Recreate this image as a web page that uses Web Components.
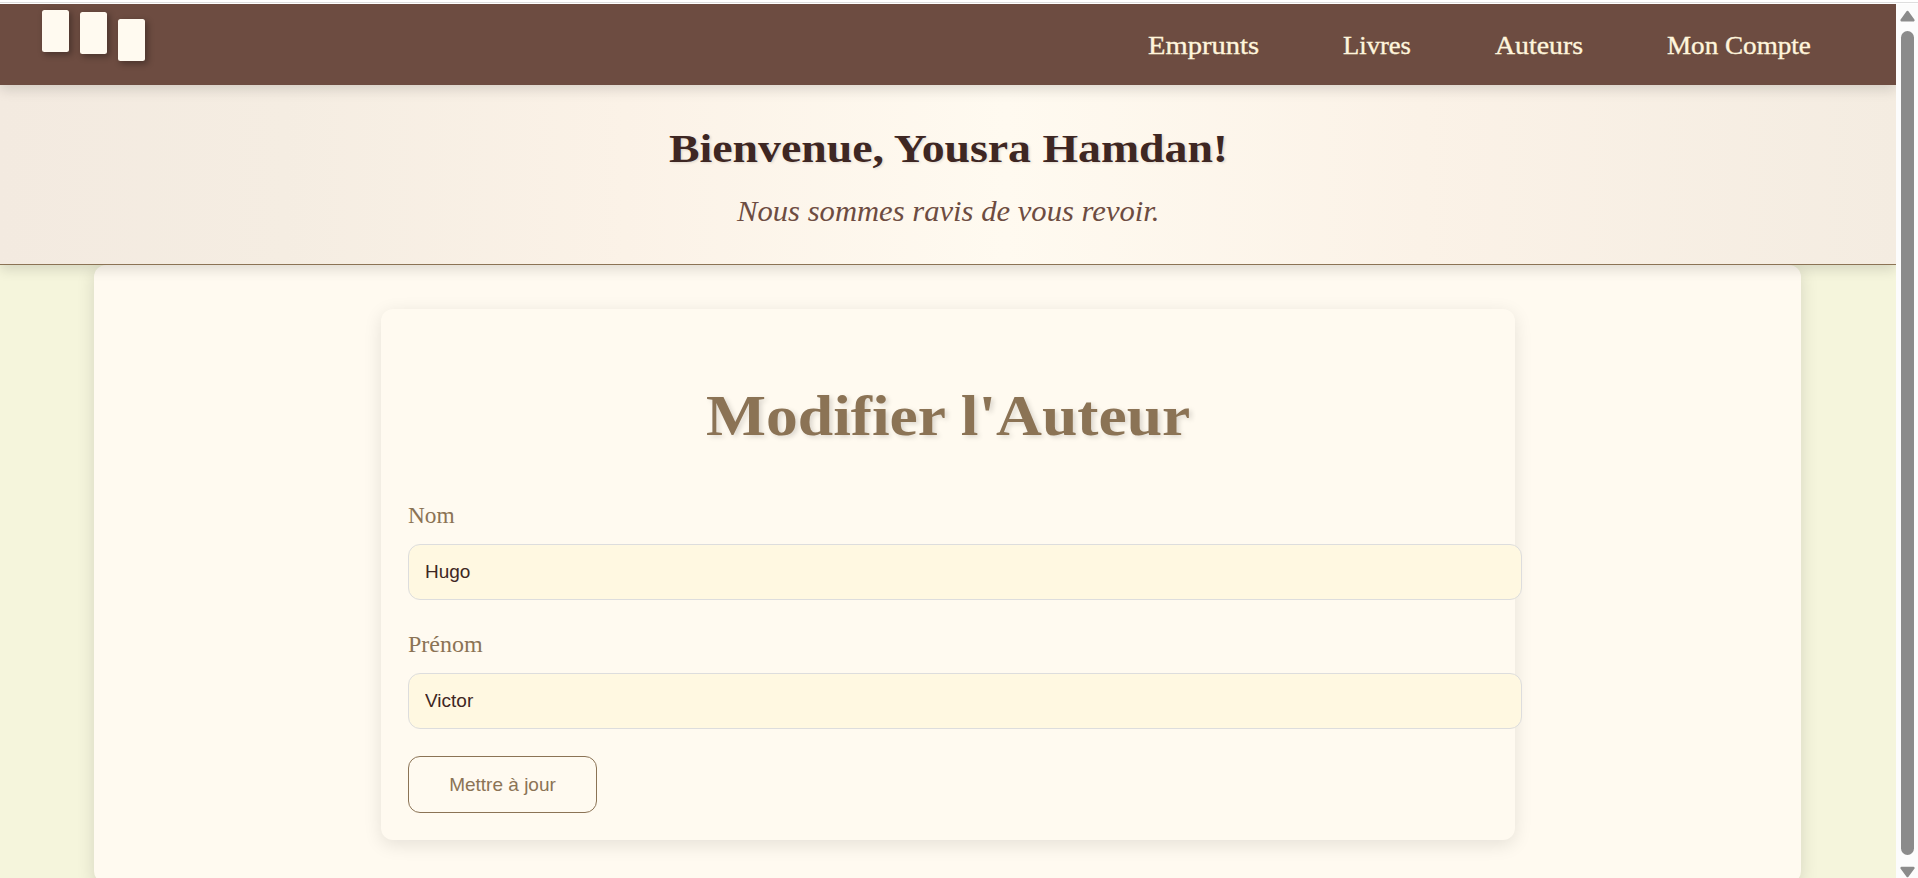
<!DOCTYPE html>
<html lang="fr">
<head>
<meta charset="utf-8">
<title>Modifier l'Auteur</title>
<style>
html,body{margin:0;height:100%;overflow:hidden;background:#fff;font-family:"Liberation Serif",serif}
</style>
</head>
<body>
<library-app></library-app>
<script>
function define(name, html, ready) {
  customElements.define(name, class extends HTMLElement {
    constructor() {
      super();
      this.attachShadow({mode: 'open'}).innerHTML = html;
    }
    connectedCallback() { if (ready) ready.call(this); }
  });
}

/* A single line of text whose drawn width is set by its "width" attribute. */
define('fit-text', `<style>
:host{display:block;white-space:nowrap;flex:none}
span{display:inline-block;transform-origin:0 50%}
</style><span><slot></slot></span>`, function () {
  const cs = getComputedStyle(this);
  const ctx = document.createElement('canvas').getContext('2d');
  ctx.font = `${cs.fontStyle} ${cs.fontWeight} ${cs.fontSize} ${cs.fontFamily}`;
  const m = ctx.measureText(this.textContent);
  const want = +this.getAttribute('width');
  const k = want / (m.actualBoundingBoxLeft + m.actualBoundingBoxRight);
  this.style.width = want + 'px';
  this.shadowRoot.querySelector('span').style.transform =
    `translateX(${m.actualBoundingBoxLeft * k}px) scaleX(${k})`;
});

define('book-logo', `<style>
:host{display:flex;gap:11px;align-items:flex-start;padding:6.4px 0 0 42px}
i{width:27px;height:41.6px;border-radius:2.5px;background:#fffaf0;box-shadow:2.4px 2.4px 6px rgba(0,0,0,.3)}
i:nth-of-type(2){margin-top:2px}
i:nth-of-type(3){margin-top:9px}
</style><i></i><i></i><i></i>`);

define('nav-bar', `<style>
:host{display:flex;justify-content:space-between;height:81px;background:#6d4c41;box-shadow:0 4.8px 12px rgba(0,0,0,.13);position:relative;z-index:2}
nav{display:flex;align-items:center;padding:2px 86px 0 0;font-size:25.5px;line-height:30px;color:#fff5dc;-webkit-text-stroke:.35px #fff5dc}
fit-text+fit-text{margin-left:84.7px}
</style><book-logo></book-logo>
<nav><fit-text width="110">Emprunts</fit-text><fit-text width="67">Livres</fit-text><fit-text width="87">Auteurs</fit-text><fit-text width="143.5">Mon Compte</fit-text></nav>`);

define('welcome-banner', `<style>
:host{display:flex;flex-direction:column;align-items:center;box-sizing:border-box;height:180px;padding:41px 2px 0 0;background:linear-gradient(90deg,#f3eae0,#f5ede2 15%,#fbf2e7 33%,#fffaf0 53%,#fbf2e7 75%,#f4ece1);border-bottom:1px solid #8b7355;box-shadow:0 4.8px 12px rgba(0,0,0,.12);position:relative;z-index:1}
.t{font-size:40px;line-height:46px;font-weight:bold;color:#3e2723;text-shadow:1.2px 1.2px 2.4px rgba(0,0,0,.12)}
.s{font-size:29.5px;line-height:34px;font-style:italic;color:#6d4c41;margin:22px 2px 0 0}
</style><fit-text class="t" width="557">Bienvenue, Yousra Hamdan!</fit-text>
<fit-text class="s" width="421">Nous sommes ravis de vous revoir.</fit-text>`);

define('form-field', `<style>
:host{display:block}
.l{font-size:24px;line-height:28px;color:#8b7355}
.l fit-text{padding-top:1px;margin-bottom:-1px}
input{display:block;margin:16px 0 0;box-sizing:border-box;width:1114px;height:56px;padding:0 16px;border:1px solid #ddd;border-radius:12px;background:#fff8e1;color:#3e2723;font:19px "Liberation Sans",Arial,sans-serif}
</style><div class="l"></div><input type="text">`, function () {
  const t = document.createElement('fit-text');
  t.setAttribute('width', this.getAttribute('label-width'));
  t.textContent = this.getAttribute('label');
  this.shadowRoot.querySelector('.l').append(t);
  this.shadowRoot.querySelector('input').value = this.getAttribute('value');
});

define('author-form', `<style>
:host{display:flex;flex-direction:column;align-items:flex-start;box-sizing:border-box;width:1134px;height:531px;padding:75px 27px 27px;background:#fffaf0;border-radius:12px;box-shadow:0 4.8px 18px rgba(0,0,0,.1)}
.h{align-self:center;font-size:56px;line-height:64px;font-weight:bold;color:#8b7355;text-shadow:2.4px 2.4px 4.8px rgba(0,0,0,.14);margin-bottom:52px}
form-field+form-field{margin-top:29px}
button{margin:27px 0 0;width:189px;height:57px;border:1px solid #8b7355;border-radius:12px;background:transparent;color:#8b7355;font:19px "Liberation Sans",Arial,sans-serif;padding:0}
</style><fit-text class="h" width="484.5">Modifier l'Auteur</fit-text>
<form-field label="Nom" label-width="47" value="Hugo"></form-field>
<form-field label="Prénom" label-width="75" value="Victor"></form-field>
<button>Mettre à jour</button>`);

define('content-panel', `<style>
:host{display:flex;justify-content:center;align-items:flex-start;box-sizing:border-box;width:1707px;height:618px;flex:none;margin:0 0 0 94px;padding:44px 0 0 1px;background:#fffaf0;border-radius:12px;box-shadow:0 4.8px 18px rgba(0,0,0,.13)}
</style><slot></slot>`);

define('scroll-bar', `<style>
:host{display:flex;flex-direction:column;align-items:center;box-sizing:border-box;width:22px;padding:6px 0 0 1px;background:#fcfcfc}
svg{display:block;width:15px;height:12px;fill:#8b8b8b;stroke:#8b8b8b;stroke-width:2.4;stroke-linejoin:round}
b{flex:1;width:13px;border-radius:6.5px;background:#8b8b8b;margin:9px 0 11px}
</style><svg viewBox="0 0 15 12"><path d="M7.5 2L13.4 10.2H1.6Z"/></svg><b></b><svg viewBox="0 0 15 12"><path d="M7.5 10L13.4 2H1.6Z"/></svg>`);

define('library-app', `<style>
:host{display:flex;flex-direction:column;height:878px;width:1918px;overflow:hidden}
.top{height:4px;flex:none;box-sizing:border-box;background:linear-gradient(#fff 2px,#dedede 2px 3px,#fff 3px)}
.row{display:flex;flex:1;min-height:0}
main{width:1896px;background:#f5f5dc;overflow:hidden;display:flex;flex-direction:column}
nav-bar,welcome-banner{flex:none}
</style><div class="top"></div>
<div class="row"><main><nav-bar></nav-bar><welcome-banner></welcome-banner><content-panel><author-form></author-form></content-panel></main><scroll-bar></scroll-bar></div>`);
</script>
</body>
</html>
